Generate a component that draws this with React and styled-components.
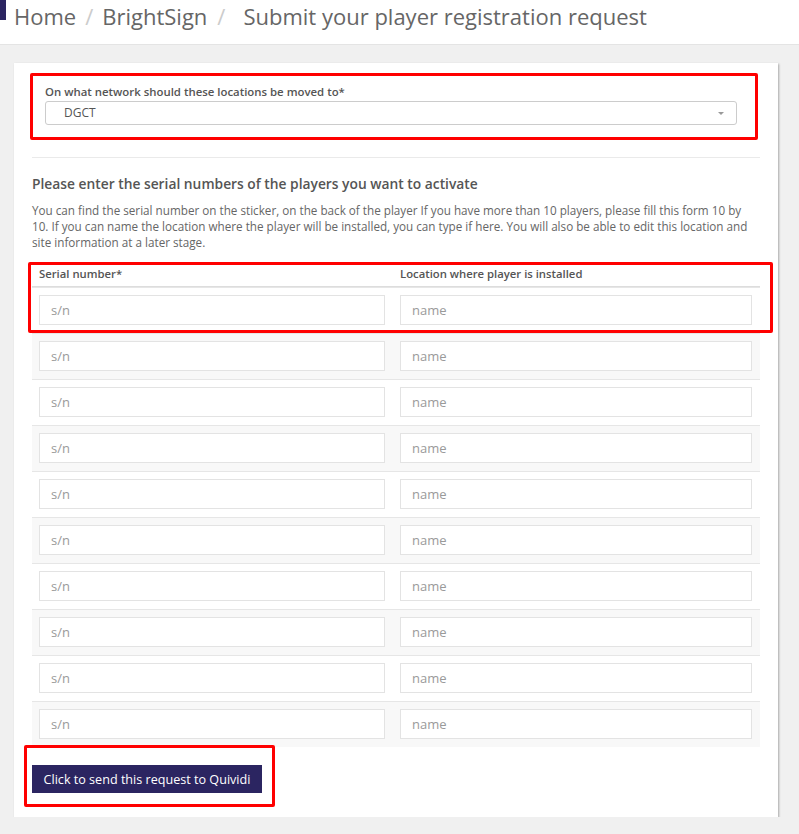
import React from "react";
import styled, { createGlobalStyle } from "styled-components";

const GlobalStyle = createGlobalStyle`
  * { box-sizing: border-box; }
  body {
    margin: 0;
    background: #f0f0f0;
    font-family: "Open Sans", "Liberation Sans", sans-serif;
    color: #555;
  }
`;

const Header = styled.header`
  position: relative;
  height: 45px;
  background: #fff;
  border-bottom: 1px solid #e4e4e4;
  padding: 0 14px;
  display: flex;
  align-items: flex-start;
`;

const Brand = styled.div`
  position: absolute;
  left: 0;
  top: 0;
  width: 6px;
  height: 20px;
  background: #2b2561;
`;

const Crumbs = styled.ol`
  margin: 0;
  padding: 0;
  list-style: none;
  display: flex;
  font-size: 22px;
  line-height: 33px;
  color: #666;

  li + li::before {
    content: "/";
    color: #ccc;
    padding: 0 9px 0 9px;
  }

  li:last-child::before {
    padding-left: 10px;
    padding-right: 18px;
  }
`;

const Card = styled.main`
  position: relative;
  margin: 18px 21px 0 14px;
  background: #fff;
  padding: 10px 18px 24px;
  box-shadow: 1px 1px 2px rgba(0, 0, 0, 0.3);
`;

const FormGroup = styled.div`
  margin-left: -2px;
  width: 728px;
  border: 3px solid #f00;
  border-radius: 2px;
  padding: 8px 18px 12px 12px;
`;

const Label = styled.label`
  display: block;
  font-size: 11.4px;
  font-weight: 600;
  line-height: 16px;
  margin-bottom: 1px;
`;

const Select = styled.div`
  position: relative;
  height: 24px;
  border: 1px solid #ccc;
  border-radius: 3px;
  padding-left: 18px;
  font-size: 12px;
  line-height: 22px;
  color: #555;

  &::after {
    content: "";
    position: absolute;
    right: 12px;
    top: 10px;
    border-left: 3px solid transparent;
    border-right: 3px solid transparent;
    border-top: 3px solid #999;
  }
`;

const Rule = styled.hr`
  margin: 17px 0 0;
  border: 0;
  border-top: 1px solid #eaeaea;
`;

const Heading = styled.h4`
  margin: 16px 0 0;
  font-size: 13.8px;
  font-weight: 600;
  line-height: 20px;
  color: #555;
`;

const Intro = styled.p`
  margin: 8px 0 0;
  font-size: 11.7px;
  line-height: 16px;
  color: #666;
`;

const Table = styled.div`
  position: relative;
  margin-top: 12px;
  width: 728px;
`;

const Row = styled.div`
  display: grid;
  grid-template-columns: 346px 1fr;
  border-top: 1px solid #e6e6e6;
  padding: 7px 8px 8px 7px;
  column-gap: 15px;

  &:nth-child(even) {
    background: #f8f8f8;
  }
`;

const HeadRow = styled.div`
  display: grid;
  grid-template-columns: 346px 1fr;
  padding: 3px 8px 4px 7px;
  column-gap: 15px;
  font-size: 11.3px;
  font-weight: 600;
  line-height: 17px;
  border-bottom: 1px solid #ddd;
`;

const Input = styled.input`
  display: block;
  width: 100%;
  height: 30px;
  border: 1px solid #e3e3e3;
  background: #fff;
  padding: 0 11px;
  font-family: inherit;
  font-size: 13px;
  color: #555;
  outline: none;

  &::placeholder {
    color: #9a9a9a;
  }
`;

const Highlight = styled.div`
  position: absolute;
  border: 3px solid #f00;
  border-radius: 2px;
  pointer-events: none;
  top: ${(p) => p.$top}px;
  left: ${(p) => p.$left}px;
  width: ${(p) => p.$w}px;
  height: ${(p) => p.$h}px;
`;

const Actions = styled.div`
  position: relative;
  margin-top: 18px;
`;

const Button = styled.button`
  display: block;
  width: 230px;
  height: 28px;
  border: 0;
  background: #2b2561;
  color: #fff;
  font-family: inherit;
  font-size: 12.6px;
  padding: 0;
  cursor: pointer;
`;

const rows = Array.from({ length: 10 }, (_, i) => i);

export default function App() {
  return (
    <>
      <GlobalStyle />
      <Header>
        <Brand />
        <Crumbs>
          <li>Home</li>
          <li>BrightSign</li>
          <li>Submit your player registration request</li>
        </Crumbs>
      </Header>
      <Card>
        <FormGroup>
          <Label>On what network should these locations be moved to*</Label>
          <Select>DGCT</Select>
        </FormGroup>
        <Rule />
        <Heading>Please enter the serial numbers of the players you want to activate</Heading>
        <Intro>
          You can find the serial number on the sticker, on the back of the player If you have
          more than 10 players, please fill this form 10 by 10. If you can name the location
          where the player will be installed, you can type if here. You will also be able to
          edit this location and site information at a later stage.
        </Intro>
        <Table>
          <HeadRow>
            <span>Serial number*</span>
            <span>Location where player is installed</span>
          </HeadRow>
          <div>
            {rows.map((i) => (
              <Row key={i}>
                <Input placeholder="s/n" />
                <Input placeholder="name" />
              </Row>
            ))}
          </div>
          <Highlight $top={0} $left={-4} $w={745} $h={71} />
        </Table>
        <Actions>
          <Button>Click to send this request to Quividi</Button>
          <Highlight $top={-20} $left={-8} $w={251} $h={62} />
        </Actions>
      </Card>
    </>
  );
}
